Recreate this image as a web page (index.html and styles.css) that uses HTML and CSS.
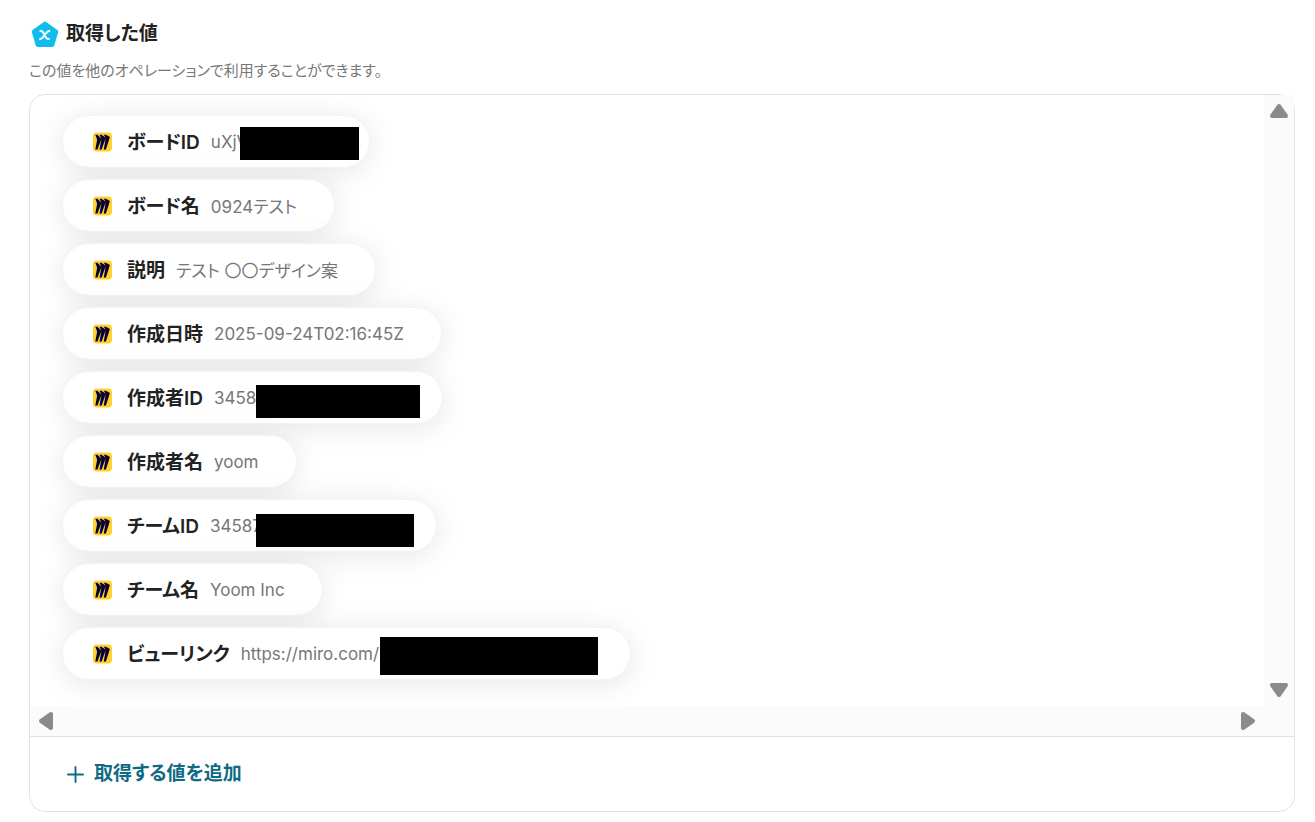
FILE: index.html
```html
<!DOCTYPE html>
<html lang="ja">
<head>
    <meta charset="UTF-8">
    <meta name="viewport" content="width=device-width, initial-scale=1.0">
    <title>取得した値</title>
    <link rel="stylesheet" href="styles.css">
</head>
<body>
    <!-- アイコン定義 -->
    <svg class="defs" aria-hidden="true">
        <symbol id="miro" viewBox="0 0 20 20">
            <rect x="0" y="0.5" width="19" height="19" rx="4" fill="#ffd02f"/>
            <path transform="translate(2.3 2.8) scale(0.61)" d="M17.4 0h-3.5L17 4.8 10.4 0H6.9l3.1 6.3L3.5 0H0l3 8.1L0 24h3.5L10 7 6.9 24h3.5L17 5.5 13.9 24h3.5L24 3.7z" fill="#050038"/>
        </symbol>
    </svg>

    <main class="outputs">
        <div class="heading">
            <svg class="heading-icon" viewBox="0 0 28 28" aria-hidden="true">
                <path d="M14 3.5 24.8 11.2 21 24H7L3.2 11.2z" fill="#12bbed" stroke="#12bbed" stroke-width="4" stroke-linejoin="round"/>
                <path d="M8.8 10.7h1.2c1.2 0 1.8.4 2.3 1.3l2.8 5.2c.5.8 1.1 1.2 2.2 1.2h1.2M19 10.7h-.7c-1.2 0-1.9.5-2.6 1.3l-3.8 4.8c-.8 1-1.5 1.6-2.6 1.6h-.8" fill="none" stroke="#fff" stroke-width="1.9"/>
            </svg>
            <h1>取得した値</h1>
        </div>
        <p class="note">この値を他のオペレーションで利用することができます。</p>

        <section class="card">
            <div class="viewer">
                <ul class="values">
                    <li class="pill pill-board"><svg class="logo"><use href="#miro"/></svg><span class="name">ボードID</span><span class="value">uXjV</span><span class="mask"></span></li>
                    <li class="pill"><svg class="logo"><use href="#miro"/></svg><span class="name">ボード名</span><span class="value">0924テスト</span></li>
                    <li class="pill"><svg class="logo"><use href="#miro"/></svg><span class="name">説明</span><span class="value">テスト 〇〇デザイン案</span></li>
                    <li class="pill"><svg class="logo"><use href="#miro"/></svg><span class="name">作成日時</span><span class="value">2025-09-24T02:16:45Z</span></li>
                    <li class="pill pill-author"><svg class="logo"><use href="#miro"/></svg><span class="name">作成者ID</span><span class="value">3458</span><span class="mask"></span></li>
                    <li class="pill"><svg class="logo"><use href="#miro"/></svg><span class="name">作成者名</span><span class="value">yoom</span></li>
                    <li class="pill pill-team"><svg class="logo"><use href="#miro"/></svg><span class="name">チームID</span><span class="value">34587</span><span class="mask"></span></li>
                    <li class="pill"><svg class="logo"><use href="#miro"/></svg><span class="name">チーム名</span><span class="value">Yoom Inc</span></li>
                    <li class="pill pill-link"><svg class="logo"><use href="#miro"/></svg><span class="name">ビューリンク</span><span class="value">https://miro.com/</span><span class="mask"></span></li>
                </ul>
                <div class="bar bar-y">
                    <button type="button" aria-label="上へ"><svg viewBox="0 0 20 16"><path d="M10 3 17 13H3z"/></svg></button>
                    <button type="button" aria-label="下へ"><svg viewBox="0 0 20 16"><path d="M10 13 3 3h14z"/></svg></button>
                </div>
                <div class="bar bar-x">
                    <button type="button" aria-label="左へ"><svg viewBox="0 0 16 20"><path d="M3 10 13 3v14z"/></svg></button>
                    <button type="button" aria-label="右へ"><svg viewBox="0 0 16 20"><path d="M13 10 3 17V3z"/></svg></button>
                </div>
                <div class="corner"></div>
            </div>
            <div class="footer">
                <button type="button" class="add">
                    <svg viewBox="0 0 18 18" aria-hidden="true"><path d="M9 1v16M1 9h16"/></svg>
                    取得する値を追加
                </button>
            </div>
        </section>
    </main>
</body>
</html>
```

FILE: styles.css
```css
body{
    margin: 0;
    background-color: #fff;
    color: #222;
    font-family: Inter, "Noto Sans CJK JP", sans-serif;
    font-feature-settings: "palt";
}
.defs{
    position: absolute;
    width: 0;
    height: 0;
}
button{
    padding: 0;
    border: 0;
    background: none;
    font: inherit;
    cursor: pointer;
}
.outputs{
    padding: 20px 20px 10px 29px;
}
.heading{
    display: flex;
    align-items: center;
    gap: 6px;
    padding-left: 1px;
    height: 28px;
}
.heading-icon{
    width: 30px;
    height: 29px;
}
h1{
    margin: 0;
    font-size: 19px;
    line-height: 28px;
    font-weight: 600;
}
.note{
    margin: 12px 0;
    font-size: 15px;
    line-height: 22px;
    color: #777;
}
.card{
    border: 1px solid #e2e2e2;
    border-radius: 16px;
}
.viewer{
    display: grid;
    grid-template-columns: 1fr 30px;
    grid-template-rows: auto 30px;
    border-bottom: 1px solid #e2e2e2;
}
.values{
    display: flex;
    flex-direction: column;
    align-items: flex-start;
    gap: 11px;
    margin: 0;
    padding: 20px 32px 26px;
    list-style: none;
    overflow: hidden;
}
.pill{
    position: relative;
    box-sizing: border-box;
    display: flex;
    align-items: center;
    height: 53px;
    padding: 0 37px 0 30px;
    border: 1px solid #f3f3f3;
    border-radius: 27px;
    background-color: #fff;
    box-shadow: 0 4px 30px rgba(0, 0, 0, 0.1);
}
.logo{
    width: 20px;
    height: 20px;
    margin-right: 14px;
}
.name{
    margin-right: 11px;
    padding-bottom: 2px;
    font-size: 19px;
    font-weight: 600;
}
.value{
    font-size: 17px;
    color: #777;
}

/* 伏せ字 */
.mask{
    position: absolute;
    background-color: #000;
}
.pill-board{width: 308px;}
.pill-board .mask{left: 177px; right: 10px; top: 11px; height: 33px;}
.pill-author{width: 381px;}
.pill-author .mask{left: 193px; right: 22px; top: 13px; height: 33px;}
.pill-team{width: 375px;}
.pill-team .mask{left: 193px; right: 22px; top: 14px; height: 33px;}
.pill-link{width: 569px;}
.pill-link .mask{left: 317px; right: 32px; top: 9px; height: 38px;}

/* スクロールバー */
.bar{
    display: flex;
    justify-content: space-between;
    background-color: #fbfbfb;
}
.bar button{
    display: flex;
}
.bar path{
    fill: #8b8b8b;
    stroke: #8b8b8b;
    stroke-width: 4;
    stroke-linejoin: round;
}
.bar-y{
    flex-direction: column;
    align-items: center;
    padding: 8px 0;
}
.bar-y svg{
    width: 20px;
    height: 16px;
}
.bar-x{
    align-items: center;
    padding: 0 8px;
}
.bar-x svg{
    width: 16px;
    height: 20px;
}
.corner{
    background-color: #fbfbfb;
}
.footer{
    padding: 22px 37px;
}
.add{
    display: flex;
    align-items: center;
    gap: 10px;
    color: #0f6a85;
    font-size: 19px;
    line-height: 30px;
    font-weight: 600;
}
.add svg{
    width: 17px;
    height: 17px;
    fill: none;
    stroke: currentColor;
    stroke-width: 2;
    stroke-linecap: round;
}
```
